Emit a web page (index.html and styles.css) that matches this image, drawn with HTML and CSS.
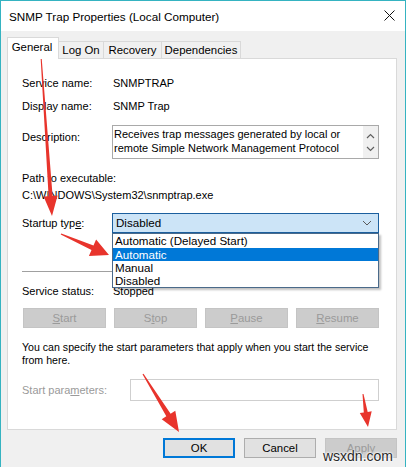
FILE: index.html
```html
<!DOCTYPE html>
<html lang="en">
<head>
  <meta charset="UTF-8">
  <title>SNMP Trap Properties (Local Computer)</title>
  <link rel="stylesheet" href="styles.css">
</head>
<body>
  <div class="window">
    <div class="titlebar">
      <span class="title">SNMP Trap Properties (Local Computer)</span>
      <svg class="close" width="11" height="11" viewBox="0 0 11 11">
        <path d="M0.5 0.5 L10.5 10.5 M10.5 0.5 L0.5 10.5" stroke="#111" stroke-width="1" fill="none"/>
      </svg>
    </div>

    <div class="content">
      <div class="tabs">
        <div class="tab active">General</div>
        <div class="tab tab-logon">Log On</div>
        <div class="tab tab-recovery">Recovery</div>
        <div class="tab tab-deps">Dependencies</div>
      </div>

      <div class="panel">
        <div class="row row-name">
          <span class="label">Service name:</span>
          <span class="value">SNMPTRAP</span>
        </div>
        <div class="row row-display">
          <span class="label">Display name:</span>
          <span class="value">SNMP Trap</span>
        </div>
        <div class="row row-desc">
          <span class="label">Description:</span>
          <div class="desc-box">
            <div class="desc-text">Receives trap messages generated by local or remote Simple Network Management Protocol</div>
            <div class="scrollbar">
              <svg width="9" height="6" viewBox="0 0 9 6"><path d="M1 5 L4.5 1.5 L8 5" stroke="#606060" stroke-width="1.2" fill="none"/></svg>
              <svg width="9" height="6" viewBox="0 0 9 6"><path d="M1 1 L4.5 4.5 L8 1" stroke="#606060" stroke-width="1.2" fill="none"/></svg>
            </div>
          </div>
        </div>
        <div class="path-label">Path to executable:</div>
        <div class="path-value">C:\WINDOWS\System32\snmptrap.exe</div>

        <div class="row row-startup">
          <span class="label">Startup typ<u>e</u>:</span>
          <div class="select-wrap">
            <div class="select">
              <span>Disabled</span>
              <svg width="10" height="6" viewBox="0 0 10 6"><path d="M1 1 L5 5 L9 1" stroke="#5a5a5a" stroke-width="1" fill="none"/></svg>
            </div>
            <div class="dropdown">
              <div class="option">Automatic (Delayed Start)</div>
              <div class="option selected">Automatic</div>
              <div class="option">Manual</div>
              <div class="option">Disabled</div>
            </div>
          </div>
        </div>

        <div class="separator"></div>

        <div class="row row-status">
          <span class="label">Service status:</span>
          <span class="value">Stopped</span>
        </div>

        <div class="service-buttons">
          <button class="btn disabled"><u>S</u>tart</button>
          <button class="btn disabled">S<u>t</u>op</button>
          <button class="btn disabled"><u>P</u>ause</button>
          <button class="btn disabled"><u>R</u>esume</button>
        </div>

        <p class="hint">You can specify the start parameters that apply when you start the service<br>from here.</p>

        <div class="row row-params">
          <span class="label params-label">Start para<u>m</u>eters:</span>
          <div class="params-input"></div>
        </div>
      </div>

      <div class="footer">
        <button class="btn btn-ok">OK</button>
        <button class="btn btn-cancel">Cancel</button>
        <button class="btn disabled">Apply</button>
      </div>
    </div>

    <!-- red annotation arrows drawn over the dialog -->
    <svg class="arrows" width="406" height="467" viewBox="0 0 406 467">
      <polygon points="40.5,55 51.6,194.9 56.6,194.6 51,215 42.6,195.5 47.6,195.2 39.5,55.1" />
      <polygon points="60.3,232.4 92.5,244.5 95.1,238.5 108,254 87.9,255 90.5,249.1 59.7,233.6" />
      <polygon points="142.5,372.7 169.6,412.7 174.3,409.8 178,431 160.7,418.2 165.3,415.3 141.5,373.3" />
      <polygon points="362.5,392.9 366.7,410.9 370.7,410.3 367,426 358.8,412.1 362.8,411.5 361.5,393.1" />
    </svg>

    <div class="watermark">wsxdn.com</div>
  </div>
</body>
</html>
```

FILE: styles.css
```css
body {
  margin: 0;
  padding: 0;
  font-family: "Liberation Sans", Arial, sans-serif;
  font-size: 11px;
  color: #000;
}

.window {
  position: relative;
  width: 406px;
  height: 467px;
  box-sizing: border-box;
  border: 1px solid #35b3c1;
  border-bottom: none;
  background-color: #f0f0f0;
  overflow: hidden;
}

.titlebar {
  height: 30px;
  background-color: #fff;
  display: flex;
  align-items: center;
  justify-content: space-between;
  padding: 0 10px 0 8px;
}

.title {
  font-size: 11.7px;
  padding-top: 1px;
}

.close {
  margin-top: -1px;
}

.content {
  padding: 6px 8px 0 6px;
}

/* Tabs */
.tabs {
  display: flex;
  align-items: flex-end;
  height: 21px;
  position: relative;
  z-index: 1;
}

.tab {
  height: 17px;
  box-sizing: border-box;
  border: 1px solid #d9d9d9;
  border-bottom: none;
  border-left: none;
  background-color: #f0f0f0;
  font-size: 11.4px;
  line-height: 16px;
  text-align: center;
}

.tab.active {
  height: 22px;
  margin-bottom: -1px;
  width: 52px;
  border-left: 1px solid #d9d9d9;
  background-color: #fff;
  line-height: 19px;
  padding-right: 2px;
}

.tab-logon { width: 45px; }
.tab-recovery { width: 58px; }
.tab-deps { width: 79px; }

.panel {
  height: 372px;
  box-sizing: border-box;
  border: 1px solid #d9d9d9;
  background-color: #fff;
  padding: 0 17px 0 14px;
}

.row {
  display: flex;
  align-items: center;
  line-height: 14px;
}

.label {
  width: 90px;
  flex-shrink: 0;
}

.value {
  padding-left: 1px;
}

.row-name { margin-top: 17px; }
.row-display { margin-top: 9px; }

.row-desc {
  margin-top: 12px;
  align-items: flex-start;
}

.row-desc .label {
  padding-top: 5px;
}

.desc-box {
  flex: 1;
  height: 34px;
  box-sizing: border-box;
  border: 1px solid #a9a9a9;
  display: flex;
}

.desc-text {
  flex: 1;
  padding: 2px 0 0 1px;
  line-height: 13.5px;
}

.scrollbar {
  width: 15px;
  background-color: #f0f0f0;
  display: flex;
  flex-direction: column;
  align-items: center;
  justify-content: space-around;
  padding: 3px 0;
}

.path-label {
  margin-top: 12px;
  line-height: 14px;
}

.path-value {
  margin-top: 3px;
  line-height: 14px;
}

.row-startup {
  margin-top: 11px;
}

.select-wrap {
  flex: 1;
  position: relative;
}

.select {
  height: 20px;
  box-sizing: border-box;
  border: 1px solid #1b5f9e;
  background-color: #cce4f7;
  display: flex;
  align-items: center;
  justify-content: space-between;
  padding: 0 6px 0 3px;
  font-size: 11.6px;
}

.dropdown {
  position: absolute;
  top: 20px;
  left: 0;
  right: 0;
  box-sizing: border-box;
  border: 1px solid #4a6a8a;
  background-color: #fff;
  box-shadow: 2px 2px 2px rgba(0, 0, 0, 0.25);
  z-index: 2;
}

.option {
  height: 13px;
  line-height: 13px;
  padding-left: 2px;
  font-size: 11.6px;
}

.option:first-child {
  height: 14px;
  line-height: 14px;
}

.option.selected {
  background-color: #0078d7;
  color: #fff;
}

.separator {
  margin-top: 38px;
  height: 1px;
  background-color: #a0a0a0;
}

.row-status {
  margin-top: 12px;
}

.service-buttons {
  margin-top: 10px;
  display: flex;
  justify-content: space-between;
  padding-left: 1px;
}

.btn {
  width: 83px;
  height: 20px;
  box-sizing: border-box;
  font-family: inherit;
  font-size: 11.4px;
  padding: 0;
  border: 1px solid #adadad;
  background-color: #e1e1e1;
  color: #000;
}

.btn.disabled {
  background-color: #cccccc;
  border-color: #c4c4c4;
  color: #9a9a9a;
}

.hint {
  margin: 13px 0 0;
  font-size: 10.6px;
  line-height: 13px;
  white-space: nowrap;
}

.row-params {
  margin-top: 12px;
}

.params-label {
  width: 108px;
  color: #9a9a9a;
}

.params-input {
  flex: 1;
  height: 22px;
  box-sizing: border-box;
  border: 1px solid #cfcfcf;
  background-color: #fff;
}

.footer {
  display: flex;
  justify-content: flex-end;
  gap: 9px;
  margin-top: 8px;
}

.footer .btn {
  width: 72px;
}

.btn-ok {
  border: 2px solid #0078d7;
}

/* annotation overlay */
.arrows {
  position: absolute;
  top: 0;
  left: 0;
  pointer-events: none;
  fill: #e8342c;
}

.watermark {
  position: absolute;
  right: 12px;
  bottom: 3px;
  font-family: "Liberation Sans", Arial, sans-serif;
  font-size: 14px;
  color: #2a2a2a;
  text-shadow: 0 0 2px #fff, 0 0 2px #fff, 0 0 3px #fff;
}
```
